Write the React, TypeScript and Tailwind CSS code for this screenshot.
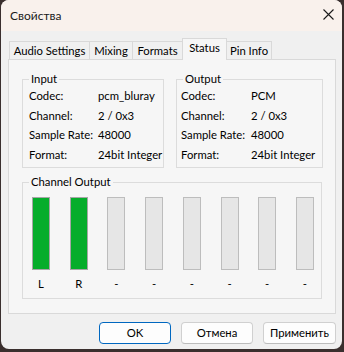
import type { ReactNode } from 'react'

const font = { fontFamily: 'Lato, "Liberation Sans", sans-serif' }

const tabs = [
  { name: 'Audio Settings', w: 'w-[80px]' },
  { name: 'Mixing', w: 'w-[43px]' },
  { name: 'Formats', w: 'w-[50px]' },
  { name: 'Status', w: 'w-[45px]' },
  { name: 'Pin Info', w: 'w-[45px]' },
]

const inputInfo = [
  ['Codec:', 'pcm_bluray'],
  ['Channel:', '2 / 0x3'],
  ['Sample Rate:', '48000'],
  ['Format:', '24bit Integer'],
]

const outputInfo = [
  ['Codec:', 'PCM'],
  ['Channel:', '2 / 0x3'],
  ['Sample Rate:', '48000'],
  ['Format:', '24bit Integer'],
]

const channels = [
  { label: 'L', active: true },
  { label: 'R', active: true },
  { label: '-', active: false },
  { label: '-', active: false },
  { label: '-', active: false },
  { label: '-', active: false },
  { label: '-', active: false },
  { label: '-', active: false },
]

function GroupBox({ title, className, children }: { title: string; className: string; children: ReactNode }) {
  return (
    <fieldset className={`border border-[#dcdcdc] ${className}`}>
      <legend className="ml-[6px] px-[2px] leading-[16px]">{title}</legend>
      {children}
    </fieldset>
  )
}

function InfoRows({ rows, labelPad, valueCol }: { rows: string[][]; labelPad: string; valueCol: string }) {
  return (
    <div className={labelPad}>
      {rows.map(([k, v]) => (
        <div key={k} className="flex h-[19.5px] items-center">
          <span className={`${valueCol} shrink-0`}>{k}</span>
          <span>{v}</span>
        </div>
      ))}
    </div>
  )
}

export default function App() {
  return (
    <div className="w-[344px] h-[352px] bg-[#3a2f2e] pl-[1px] text-[11.3px] text-black whitespace-nowrap" style={font}>
      <div className="w-[341px] h-[349px] rounded-[8px] overflow-hidden bg-[#f0f0f0] flex flex-col">
        {/* Title bar */}
        <div className="h-[31px] shrink-0 bg-[#f9f1ec] flex items-center justify-between pl-[9px] pr-[8px]">
          <span className="text-[#1a1a1a] text-[12px]">Свойства</span>
          <svg width="11" height="11" viewBox="0 0 11 11" className="mt-[-2px]">
            <path d="M0.5 0.5 L10.5 10.5 M10.5 0.5 L0.5 10.5" stroke="#1a1a1a" strokeWidth="1.1" />
          </svg>
        </div>

        {/* Tabs */}
        <div className="mt-[7px] ml-[8px] flex items-end h-[21px] relative z-10">
          {tabs.map((t, i) => {
            const selected = t.name === 'Status'
            return selected ? (
              <div
                key={t.name}
                className={`${t.w} h-[22px] mb-[-1px] border border-b-0 border-[#d9d9d9] bg-[#f6f6f6] flex justify-center pt-[1px] leading-[16px]`}
              >
                {t.name}
              </div>
            ) : (
              <div
                key={t.name}
                className={`${t.w} h-[18px] border-t border-[#d9d9d9] ${
                  tabs[i - 1]?.name === 'Status' ? '' : 'border-l'
                } ${i === tabs.length - 1 ? 'border-r' : ''} bg-[#f0f0f0] flex justify-center pt-[1px] leading-[16px]`}
              >
                {t.name}
              </div>
            )
          })}
        </div>

        {/* Tab panel */}
        <div className="ml-[7px] w-[328px] h-[255px] shrink-0 border border-[#d9d9d9] bg-[#f6f6f6] pt-[11px] pl-[13px]">
          <div className="flex gap-[12px]">
            <GroupBox title="Input" className="w-[142px] h-[97px]">
              <InfoRows rows={inputInfo} labelPad="pl-[6px]" valueCol="w-[69px]" />
            </GroupBox>
            <GroupBox title="Output" className="w-[147px] h-[97px]">
              <InfoRows rows={outputInfo} labelPad="pl-[4px]" valueCol="w-[70px]" />
            </GroupBox>
          </div>

          <GroupBox title="Channel Output" className="mt-[6px] w-[300px] h-[125px]">
            <div className="mt-[7px] pl-[9px] pr-[7px] flex justify-between">
              {channels.map((c, i) => (
                <div key={i} className="w-[18px] flex flex-col items-center">
                  <div
                    className={`w-[18px] h-[73px] border ${
                      c.active ? 'bg-[#06ad2b] border-[#a6a6a6]' : 'bg-[#e6e6e6] border-[#bdbdbd]'
                    }`}
                  />
                  <span className="mt-[6px] leading-[16px]">{c.label}</span>
                </div>
              ))}
            </div>
          </GroupBox>
        </div>

        {/* Buttons */}
        <div className="mt-[8px] flex justify-end gap-[10px] pr-[6px]">
          <button className="w-[72px] h-[22px] rounded-[4px] bg-[#fdfdfd] border border-[#0067c0] leading-[16px]">OK</button>
          <button className="w-[72px] h-[22px] rounded-[4px] bg-[#fdfdfd] border border-[#d0d0d0] border-b-[#bcbcbc] leading-[16px]">
            Отмена
          </button>
          <button className="w-[73px] h-[22px] rounded-[4px] bg-[#fdfdfd] border border-[#d0d0d0] border-b-[#bcbcbc] leading-[16px]">
            Применить
          </button>
        </div>
      </div>
    </div>
  )
}
